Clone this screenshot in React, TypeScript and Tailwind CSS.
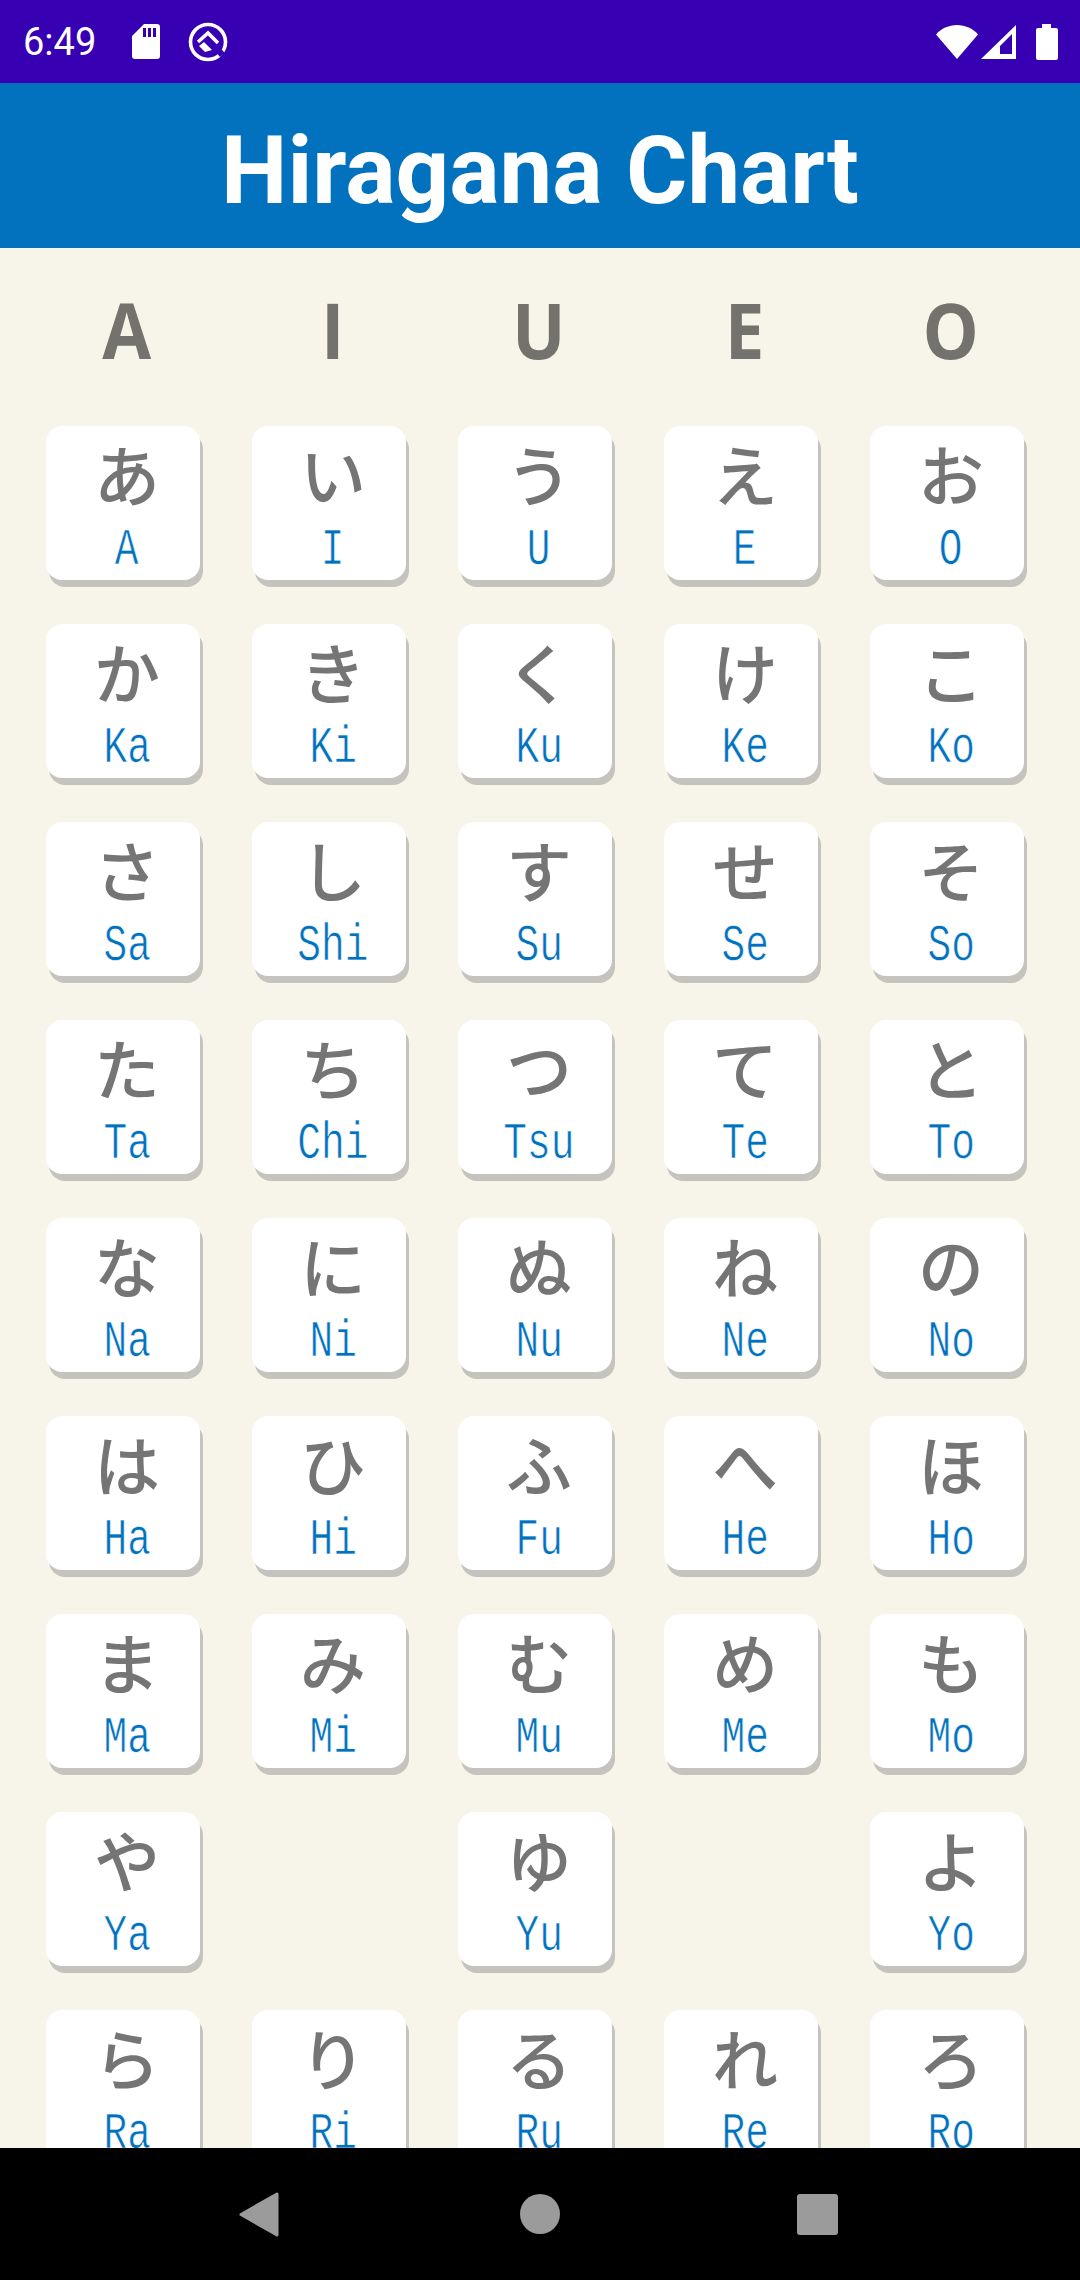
const rows: [string, string][][] = [
  [["あ","A"],["い","I"],["う","U"],["え","E"],["お","O"]],
  [["か","Ka"],["き","Ki"],["く","Ku"],["け","Ke"],["こ","Ko"]],
  [["さ","Sa"],["し","Shi"],["す","Su"],["せ","Se"],["そ","So"]],
  [["た","Ta"],["ち","Chi"],["つ","Tsu"],["て","Te"],["と","To"]],
  [["な","Na"],["に","Ni"],["ぬ","Nu"],["ね","Ne"],["の","No"]],
  [["は","Ha"],["ひ","Hi"],["ふ","Fu"],["へ","He"],["ほ","Ho"]],
  [["ま","Ma"],["み","Mi"],["む","Mu"],["め","Me"],["も","Mo"]],
  [["や","Ya"],["",""],["ゆ","Yu"],["",""],["よ","Yo"]],
  [["ら","Ra"],["り","Ri"],["る","Ru"],["れ","Re"],["ろ","Ro"]],
];

function Card({ kana, roman }: { kana: string; roman: string }) {
  if (!kana) return <div className="h-[154px]" />;
  return (
    <div className="h-[154px] rounded-[16px] bg-white shadow-[3px_7px_0_#c5c3bd] flex flex-col items-center pl-[8px]">
      <div className="h-[97px] pt-[2px] text-[66px] leading-[88px] text-[#757575] font-['Noto_Sans_CJK_JP',sans-serif] font-medium">{kana}</div>
      <div className="h-[50px] text-[52px] leading-[56px] text-[#0272bf] font-['Liberation_Mono',monospace] scale-x-[0.76] whitespace-nowrap [-webkit-text-stroke:0.7px_#ffffff]">{roman}</div>
    </div>
  );
}

export default function App() {
  return (
    <div className="h-[2280px] w-[1080px] flex flex-col overflow-hidden bg-[#f7f5e9] font-['Roboto',sans-serif]">
      <div className="h-[83px] shrink-0 bg-[#3700b3] flex items-center pl-[23px] pr-[22px] text-white">
        <span className="text-[38px] leading-none font-normal w-[109px]">6:49</span>
        <svg width="28" height="35" viewBox="0 0 28 35" className="mr-[28px]">
          <path fill="#fff" fillRule="evenodd" d="M12 0h13a3 3 0 0 1 3 3v29a3 3 0 0 1-3 3H3a3 3 0 0 1-3-3V12Z M11 4v9h3V4Z M16 4v9h3V4Z M21 4v9h3V4Z" />
        </svg>
        <svg width="40" height="40" viewBox="0 0 40 40">
          <circle cx="20" cy="20" r="17.5" fill="none" stroke="#fff" strokeWidth="3.6" />
          <path fill="none" stroke="#fff" strokeWidth="3.6" d="M10 20 L20 11 L30 21" />
          <path fill="#fff" d="M11 24 L16 20 L24 28 L17 30 Z" />
          <path fill="#3700b3" d="M28 30 L32 35 L37 31 L31 25 Z" />
        </svg>
        <div className="flex-1" />
        <svg width="42" height="34" viewBox="0 0 42 34" className="mr-[3px]">
          <path fill="#fff" d="M0 9.500C5 3.500 13 0 21 0s16 3.500 21 9.500L21 34Z" />
        </svg>
        <svg width="36" height="34" viewBox="0 0 36 34" className="mr-[19px]">
          <path fill="#fff" fillRule="evenodd" d="M35 0v34H0Z M31 9 19 21v10h12Z" />
          <path fill="#fff" d="M19 29h12v2H19Z" />
        </svg>
        <svg width="22" height="36" viewBox="0 0 22 36">
          <path fill="#fff" d="M6 0h9v4h5a2 2 0 0 1 2 2v28a2 2 0 0 1-2 2H2a2 2 0 0 1-2-2V6a2 2 0 0 1 2-2h4Z" />
        </svg>
      </div>
      <div className="h-[165px] shrink-0 bg-[#0272bf] flex items-center justify-center">
        <h1 className="text-[94px] leading-none font-bold text-white pt-[10px]">Hiragana Chart</h1>
      </div>
      <div className="flex-1 min-h-0 overflow-hidden pl-[46px]">
        <div className="grid grid-cols-[repeat(5,154px)] gap-x-[52px] h-[178px] items-start pt-[44px]">
          {["A","I","U","E","O"].map((v) => (
            <div key={v} className="text-center pl-[8px] text-[77px] leading-[76px] font-bold text-[#73726c] font-['Open_Sans',sans-serif] scale-x-[0.92]">{v}</div>
          ))}
        </div>
        <div className="grid grid-cols-[repeat(5,154px)] gap-x-[52px] gap-y-[44px]">
          {rows.flat().map(([k, r], i) => (
            <Card key={i} kana={k} roman={r} />
          ))}
        </div>
      </div>
      <div className="h-[132px] shrink-0 bg-black relative flex items-center">
        <svg width="1080" height="132" viewBox="0 0 1080 132">
          <path fill="#9b9b9b" stroke="#9b9b9b" strokeWidth="3" strokeLinejoin="round" d="M277 46 V87 L241 66.500 Z" />
          <circle cx="540" cy="66" r="20" fill="#9b9b9b" />
          <rect x="797" y="46" width="41" height="41" rx="3" fill="#9b9b9b" />
        </svg>
      </div>
    </div>
  );
}
